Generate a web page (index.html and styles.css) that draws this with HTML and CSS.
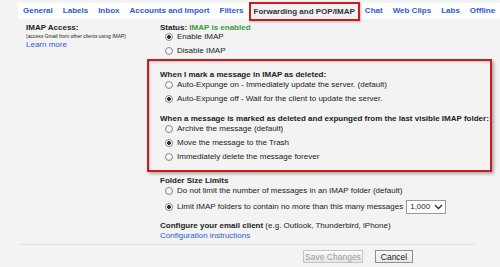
FILE: index.html
```html
<!DOCTYPE html>
<html lang="en">
    <head>
        <meta charset="UTF-8">
        <title>Settings - Forwarding and POP/IMAP</title>
        <link rel="stylesheet" href="styles.css">
    </head>

    <body>
        <nav class="tabs">
            <a class="tab" href="#">General</a>
            <a class="tab" href="#">Labels</a>
            <a class="tab" href="#">Inbox</a>
            <a class="tab" href="#">Accounts and Import</a>
            <a class="tab" href="#">Filters</a>
            <span class="tab active">Forwarding and POP/IMAP</span>
            <a class="tab" href="#">Chat</a>
            <a class="tab" href="#">Web Clips</a>
            <a class="tab" href="#">Labs</a>
            <a class="tab" href="#">Offline</a>
        </nav>

        <main class="settings">
            <section class="setting">
                <div class="setting-label">
                    <div class="label-title">IMAP Access:</div>
                    <div class="label-note">(access Gmail from other clients using IMAP)</div>
                    <a class="link" href="#">Learn more</a>
                </div>

                <div class="setting-value">
                    <div class="status">Status: <span class="enabled">IMAP is enabled</span></div>
                    <label class="option"><input type="radio" name="imap" checked> Enable IMAP</label>
                    <label class="option"><input type="radio" name="imap"> Disable IMAP</label>

                    <div class="highlight">
                        <div class="group">
                            <div class="group-title">When I mark a message in IMAP as deleted:</div>
                            <label class="option"><input type="radio" name="expunge"> Auto-Expunge on - Immediately update the server. (default)</label>
                            <label class="option"><input type="radio" name="expunge" checked> Auto-Expunge off - Wait for the client to update the server.</label>
                        </div>
                        <div class="group">
                            <div class="group-title">When a message is marked as deleted and expunged from the last visible IMAP folder:</div>
                            <label class="option"><input type="radio" name="deleted"> Archive the message (default)</label>
                            <label class="option"><input type="radio" name="deleted" checked> Move the message to the Trash</label>
                            <label class="option"><input type="radio" name="deleted"> Immediately delete the message forever</label>
                        </div>
                    </div>

                    <div class="group folders">
                        <div class="group-title">Folder Size Limits</div>
                        <label class="option"><input type="radio" name="limit"> Do not limit the number of messages in an IMAP folder (default)</label>
                        <label class="option"><input type="radio" name="limit" checked> Limit IMAP folders to contain no more than this many messages
                            <span class="select">1,000
                                <svg width="9" height="6" viewBox="0 0 9 6"><path d="M1 1 L4.5 4.5 L8 1" fill="none" stroke="#333" stroke-width="1.4"/></svg>
                            </span>
                        </label>
                    </div>

                    <div class="client">
                        <div><b>Configure your email client</b> (e.g. Outlook, Thunderbird, iPhone)</div>
                        <a class="link" href="#">Configuration instructions</a>
                    </div>
                </div>
            </section>

            <div class="divider"></div>

            <div class="actions">
                <button class="btn" disabled>Save Changes</button>
                <button class="btn cancel">Cancel</button>
            </div>
        </main>
    </body>
</html>
```

FILE: styles.css
```css
body {
    margin: 0;
    background-color: #f3f3f3;
    font-family: "Liberation Sans", Arial, sans-serif;
    font-size: 8px;
    line-height: 10px;
    color: #222;
    white-space: nowrap;
}

.tabs {
    display: flex;
    height: 16px;
    margin: 3px 0 0 18px;
    background-color: white;
}
.tab {
    display: flex;
    align-items: center;
    flex-shrink: 0;
    padding: 0 5px;
    font-weight: bold;
    color: #2a5bd0;
    text-decoration: none;
}
.tab.active {
    margin: -1px 0 -2px;
    padding: 0 3px;
    color: #333;
    background-color: #f1f1f1;
    border: 2px solid #cc1a1a;
    box-shadow: 1px 1px 2px rgba(0,0,0,0.25);
}

.settings {
    padding: 4px 0 0 26px;
}
.setting {
    display: grid;
    grid-template-columns: 134px 320px;
}
.label-title {
    font-weight: bold;
}
.label-note {
    font-size: 5px;
    line-height: 7px;
}
.link {
    color: #2a5bd0;
    text-decoration: none;
}

.status {
    font-weight: bold;
    line-height: 9px;
}
.enabled {
    color: #3a9a3a;
}

.option {
    display: flex;
    align-items: center;
    gap: 4px;
}
.option + .option {
    margin-top: 4px;
}
.option input {
    appearance: none;
    width: 8px;
    height: 8px;
    margin: 0 0 0 5px;
    border: 1px solid #8a8a8a;
    border-radius: 50%;
    background: radial-gradient(circle at 40% 35%, #fff, #e4e4e4);
    flex-shrink: 0;
}
.option input:checked {
    background: radial-gradient(circle, #333 0 1.6px, #fff 2.2px, #e4e4e4);
}

.highlight {
    margin: 3px -12px 0 -13px;
    padding: 9px 11px 8px;
    border: 2px solid #cc1a1a;
    box-shadow: 2px 2px 3px rgba(0,0,0,0.3), inset 1px 1px 2px rgba(0,0,0,0.2);
}
.group + .group {
    margin-top: 10px;
}
.group-title {
    font-weight: bold;
}
.folders {
    margin-top: 4px;
}

.select {
    display: flex;
    align-items: center;
    justify-content: space-between;
    width: 33px;
    height: 12px;
    margin-left: -1px;
    padding: 0 2px 0 3px;
    background-color: white;
    border: 1px solid #999;
}

.client {
    margin-top: 7px;
}

.divider {
    width: 455px;
    height: 1px;
    margin: 3px 0 0 -6px;
    background-color: #e2e2e2;
}

.actions {
    display: flex;
    gap: 12px;
    margin-top: 5px;
    padding-left: 277px;
}
.btn {
    width: 38px;
    height: 13px;
    padding: 0;
    font-family: "Liberation Sans", Arial, sans-serif;
    font-size: 8.5px;
    color: #222;
    background: linear-gradient(#fafafa, #e6e6e6);
    border: 1px solid #8f8f8f;
}
.btn:disabled {
    width: 60px;
    color: #a0a0a0;
    border-color: #c4c4c4;
}
```
